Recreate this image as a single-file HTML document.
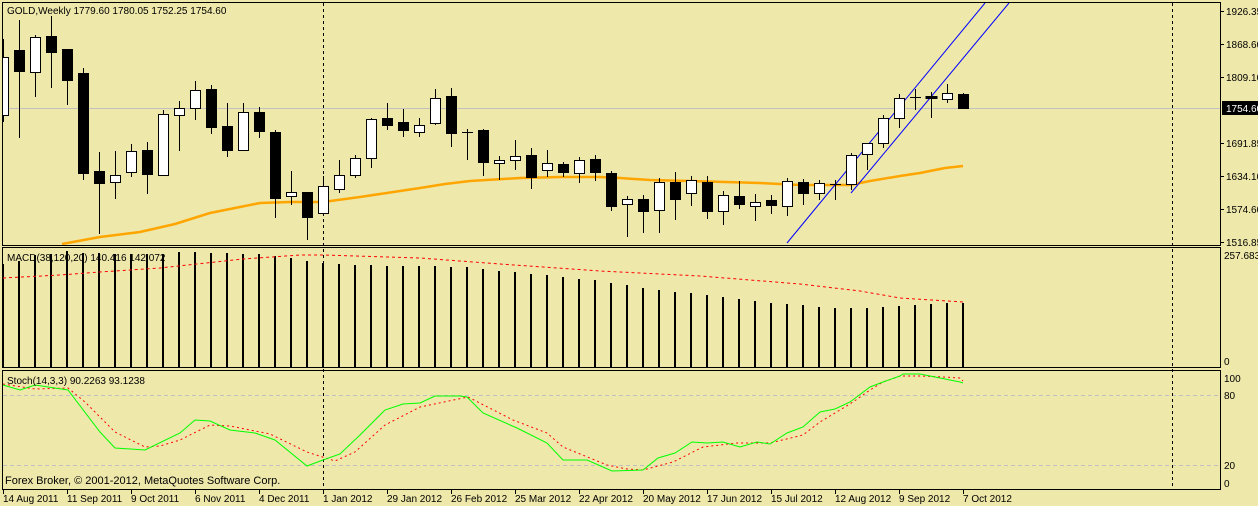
<!DOCTYPE html>
<html><head><meta charset="utf-8"><style>
html,body{margin:0;padding:0;background:#EEE8AA;width:1258px;height:506px;overflow:hidden}
svg{display:block}
text{font-family:"Liberation Sans",sans-serif;font-size:10px;fill:#000}
</style></head><body>
<svg width="1258" height="506" viewBox="0 0 1258 506" xmlns="http://www.w3.org/2000/svg">
<rect width="1258" height="506" fill="#EEE8AA"/>
<defs><clipPath id="mc"><rect x="3" y="3" width="1217" height="242"/></clipPath></defs>
<line x1="3" y1="108.5" x2="1220" y2="108.5" stroke="#c0c0c0"/>
<line x1="3" y1="395.5" x2="1220" y2="395.5" stroke="#c0c0c0" stroke-dasharray="4,3"/>
<line x1="3" y1="465.5" x2="1220" y2="465.5" stroke="#c0c0c0" stroke-dasharray="4,3"/>
<line x1="323.5" y1="3" x2="323.5" y2="489" stroke="#000" stroke-dasharray="3,3"/>
<line x1="1172.5" y1="3" x2="1172.5" y2="489" stroke="#000" stroke-dasharray="3,3"/>
<polyline fill="none" stroke="#FFA500" stroke-width="2.5" points="62,244 100,237 140,232 175,224 210,213 240,207 260,203 290,202 323,202 360,197 400,191 420,188 445,184 470,181 520,178 560,177 600,177 620,178 650,180 690,181 760,183 800,185 850,185 870,181 900,176 920,173 945,168 963,166"/>
<g clip-path="url(#mc)" stroke="#0000ff" stroke-width="1">
<line x1="787" y1="243" x2="985" y2="3"/>
<line x1="851" y1="193" x2="1009" y2="3"/>
</g>
<g clip-path="url(#mc)" stroke="#000" stroke-width="1" shape-rendering="crispEdges">
<line x1="3.5" y1="39" x2="3.5" y2="122"/><rect x="-1.5" y="57.5" width="10" height="58" fill="#fff"/>
<line x1="19.5" y1="20" x2="19.5" y2="138"/><rect x="14.5" y="50.5" width="10" height="21" fill="#000"/>
<line x1="35.5" y1="35" x2="35.5" y2="97"/><rect x="30.5" y="37.5" width="10" height="35" fill="#fff"/>
<line x1="51.5" y1="16" x2="51.5" y2="88"/><rect x="46.5" y="36.5" width="10" height="16" fill="#000"/>
<line x1="67.5" y1="49" x2="67.5" y2="105"/><rect x="62.5" y="49.5" width="10" height="31" fill="#000"/>
<line x1="83.5" y1="68" x2="83.5" y2="180"/><rect x="78.5" y="73.5" width="10" height="100" fill="#000"/>
<line x1="99.5" y1="152" x2="99.5" y2="234"/><rect x="94.5" y="171.5" width="10" height="12" fill="#000"/>
<line x1="115.5" y1="151" x2="115.5" y2="199"/><rect x="110.5" y="175.5" width="10" height="7" fill="#fff"/>
<line x1="131.5" y1="144" x2="131.5" y2="177"/><rect x="126.5" y="151.5" width="10" height="21" fill="#fff"/>
<line x1="147.5" y1="142" x2="147.5" y2="194"/><rect x="142.5" y="150.5" width="10" height="24" fill="#000"/>
<line x1="163.5" y1="110" x2="163.5" y2="176"/><rect x="158.5" y="114.5" width="10" height="61" fill="#fff"/>
<line x1="179.5" y1="101" x2="179.5" y2="151"/><rect x="174.5" y="108.5" width="10" height="7" fill="#fff"/>
<line x1="195.5" y1="81" x2="195.5" y2="120"/><rect x="190.5" y="90.5" width="10" height="18" fill="#fff"/>
<line x1="211.5" y1="85" x2="211.5" y2="134"/><rect x="206.5" y="89.5" width="10" height="38" fill="#000"/>
<line x1="227.5" y1="103" x2="227.5" y2="157"/><rect x="222.5" y="126.5" width="10" height="24" fill="#000"/>
<line x1="243.5" y1="103" x2="243.5" y2="150"/><rect x="238.5" y="112.5" width="10" height="38" fill="#fff"/>
<line x1="259.5" y1="107" x2="259.5" y2="138"/><rect x="254.5" y="112.5" width="10" height="19" fill="#000"/>
<line x1="275.5" y1="130" x2="275.5" y2="218"/><rect x="270.5" y="132.5" width="10" height="66" fill="#000"/>
<line x1="291.5" y1="171" x2="291.5" y2="205"/><rect x="286.5" y="192.5" width="10" height="4" fill="#fff"/>
<line x1="307.5" y1="192" x2="307.5" y2="240"/><rect x="302.5" y="192.5" width="10" height="25" fill="#000"/>
<line x1="323.5" y1="176" x2="323.5" y2="213"/><rect x="318.5" y="186.5" width="10" height="27" fill="#fff"/>
<line x1="339.5" y1="160" x2="339.5" y2="193"/><rect x="334.5" y="175.5" width="10" height="14" fill="#fff"/>
<line x1="355.5" y1="155" x2="355.5" y2="178"/><rect x="350.5" y="158.5" width="10" height="17" fill="#fff"/>
<line x1="371.5" y1="118" x2="371.5" y2="168"/><rect x="366.5" y="119.5" width="10" height="39" fill="#fff"/>
<line x1="387.5" y1="103" x2="387.5" y2="130"/><rect x="382.5" y="118.5" width="10" height="7" fill="#000"/>
<line x1="403.5" y1="109" x2="403.5" y2="137"/><rect x="398.5" y="122.5" width="10" height="8" fill="#000"/>
<line x1="419.5" y1="118" x2="419.5" y2="137"/><rect x="414.5" y="125.5" width="10" height="7" fill="#fff"/>
<line x1="435.5" y1="89" x2="435.5" y2="125"/><rect x="430.5" y="98.5" width="10" height="25" fill="#fff"/>
<line x1="451.5" y1="88" x2="451.5" y2="147"/><rect x="446.5" y="96.5" width="10" height="37" fill="#000"/>
<line x1="467.5" y1="129" x2="467.5" y2="160"/><line x1="462" y1="132.5" x2="473" y2="132.5"/>
<line x1="483.5" y1="129" x2="483.5" y2="176"/><rect x="478.5" y="130.5" width="10" height="32" fill="#000"/>
<line x1="499.5" y1="156" x2="499.5" y2="180"/><rect x="494.5" y="160.5" width="10" height="3" fill="#fff"/>
<line x1="515.5" y1="140" x2="515.5" y2="170"/><rect x="510.5" y="156.5" width="10" height="4" fill="#fff"/>
<line x1="531.5" y1="148" x2="531.5" y2="189"/><rect x="526.5" y="155.5" width="10" height="22" fill="#000"/>
<line x1="547.5" y1="150" x2="547.5" y2="177"/><rect x="542.5" y="163.5" width="10" height="7" fill="#fff"/>
<line x1="563.5" y1="162" x2="563.5" y2="177"/><rect x="558.5" y="164.5" width="10" height="8" fill="#000"/>
<line x1="579.5" y1="157" x2="579.5" y2="183"/><rect x="574.5" y="160.5" width="10" height="13" fill="#fff"/>
<line x1="595.5" y1="155" x2="595.5" y2="181"/><rect x="590.5" y="159.5" width="10" height="13" fill="#000"/>
<line x1="611.5" y1="171" x2="611.5" y2="211"/><rect x="606.5" y="173.5" width="10" height="33" fill="#000"/>
<line x1="627.5" y1="196" x2="627.5" y2="237"/><rect x="622.5" y="199.5" width="10" height="5" fill="#fff"/>
<line x1="643.5" y1="195" x2="643.5" y2="233"/><rect x="638.5" y="199.5" width="10" height="12" fill="#000"/>
<line x1="659.5" y1="178" x2="659.5" y2="233"/><rect x="654.5" y="182.5" width="10" height="28" fill="#fff"/>
<line x1="675.5" y1="172" x2="675.5" y2="220"/><rect x="670.5" y="182.5" width="10" height="17" fill="#000"/>
<line x1="691.5" y1="176" x2="691.5" y2="206"/><rect x="686.5" y="180.5" width="10" height="13" fill="#fff"/>
<line x1="707.5" y1="176" x2="707.5" y2="219"/><rect x="702.5" y="182.5" width="10" height="29" fill="#000"/>
<line x1="723.5" y1="191" x2="723.5" y2="225"/><rect x="718.5" y="195.5" width="10" height="16" fill="#fff"/>
<line x1="739.5" y1="181" x2="739.5" y2="209"/><rect x="734.5" y="196.5" width="10" height="8" fill="#000"/>
<line x1="755.5" y1="194" x2="755.5" y2="221"/><rect x="750.5" y="202.5" width="10" height="4" fill="#fff"/>
<line x1="771.5" y1="195" x2="771.5" y2="214"/><rect x="766.5" y="200.5" width="10" height="5" fill="#000"/>
<line x1="787.5" y1="178" x2="787.5" y2="216"/><rect x="782.5" y="181.5" width="10" height="25" fill="#fff"/>
<line x1="803.5" y1="179" x2="803.5" y2="205"/><rect x="798.5" y="182.5" width="10" height="11" fill="#000"/>
<line x1="819.5" y1="180" x2="819.5" y2="200"/><rect x="814.5" y="183.5" width="10" height="10" fill="#fff"/>
<line x1="835.5" y1="180" x2="835.5" y2="200"/><line x1="830" y1="184.5" x2="841" y2="184.5"/>
<line x1="851.5" y1="153" x2="851.5" y2="190"/><rect x="846.5" y="155.5" width="10" height="29" fill="#fff"/>
<line x1="867.5" y1="143" x2="867.5" y2="170"/><rect x="862.5" y="143.5" width="10" height="11" fill="#fff"/>
<line x1="883.5" y1="115" x2="883.5" y2="148"/><rect x="878.5" y="118.5" width="10" height="25" fill="#fff"/>
<line x1="899.5" y1="94" x2="899.5" y2="128"/><rect x="894.5" y="98.5" width="10" height="20" fill="#fff"/>
<line x1="915.5" y1="89" x2="915.5" y2="110"/><line x1="910" y1="97.5" x2="921" y2="97.5"/>
<line x1="931.5" y1="92" x2="931.5" y2="118"/><rect x="926" y="96.5" width="11" height="2" fill="#000"/>
<line x1="947.5" y1="84" x2="947.5" y2="103"/><rect x="942.5" y="93.5" width="10" height="6" fill="#fff"/>
<line x1="963.5" y1="93" x2="963.5" y2="109"/><rect x="958.5" y="94.5" width="10" height="14" fill="#000"/>
</g>
<g stroke="#000" stroke-width="2" shape-rendering="crispEdges">
<line x1="3" y1="264" x2="3" y2="368"/><line x1="19" y1="261" x2="19" y2="368"/><line x1="35" y1="255" x2="35" y2="368"/><line x1="51" y1="254" x2="51" y2="368"/>
<line x1="67" y1="251" x2="67" y2="368"/><line x1="83" y1="253" x2="83" y2="368"/><line x1="99" y1="253" x2="99" y2="368"/><line x1="115" y1="254" x2="115" y2="368"/>
<line x1="131" y1="254" x2="131" y2="368"/><line x1="147" y1="254" x2="147" y2="368"/><line x1="163" y1="254" x2="163" y2="368"/><line x1="179" y1="252" x2="179" y2="368"/>
<line x1="195" y1="252" x2="195" y2="368"/><line x1="211" y1="253" x2="211" y2="368"/><line x1="227" y1="253" x2="227" y2="368"/><line x1="243" y1="254" x2="243" y2="368"/>
<line x1="259" y1="254" x2="259" y2="368"/><line x1="275" y1="256" x2="275" y2="368"/><line x1="291" y1="258" x2="291" y2="368"/><line x1="307" y1="261" x2="307" y2="368"/>
<line x1="323" y1="263" x2="323" y2="368"/><line x1="339" y1="264" x2="339" y2="368"/><line x1="355" y1="265" x2="355" y2="368"/><line x1="371" y1="265" x2="371" y2="368"/>
<line x1="387" y1="266" x2="387" y2="368"/><line x1="403" y1="266" x2="403" y2="368"/><line x1="419" y1="266" x2="419" y2="368"/><line x1="435" y1="266" x2="435" y2="368"/>
<line x1="451" y1="267" x2="451" y2="368"/><line x1="467" y1="267" x2="467" y2="368"/><line x1="483" y1="269" x2="483" y2="368"/><line x1="499" y1="271" x2="499" y2="368"/>
<line x1="515" y1="272" x2="515" y2="368"/><line x1="531" y1="274" x2="531" y2="368"/><line x1="547" y1="275" x2="547" y2="368"/><line x1="563" y1="277" x2="563" y2="368"/>
<line x1="579" y1="279" x2="579" y2="368"/><line x1="595" y1="280" x2="595" y2="368"/><line x1="611" y1="283" x2="611" y2="368"/><line x1="627" y1="285" x2="627" y2="368"/>
<line x1="643" y1="288" x2="643" y2="368"/><line x1="659" y1="290" x2="659" y2="368"/><line x1="675" y1="292" x2="675" y2="368"/><line x1="691" y1="293" x2="691" y2="368"/>
<line x1="707" y1="295" x2="707" y2="368"/><line x1="723" y1="297" x2="723" y2="368"/><line x1="739" y1="299" x2="739" y2="368"/><line x1="755" y1="301" x2="755" y2="368"/>
<line x1="771" y1="303" x2="771" y2="368"/><line x1="787" y1="304" x2="787" y2="368"/><line x1="803" y1="305" x2="803" y2="368"/><line x1="819" y1="307" x2="819" y2="368"/>
<line x1="835" y1="308" x2="835" y2="368"/><line x1="851" y1="308" x2="851" y2="368"/><line x1="867" y1="308" x2="867" y2="368"/><line x1="883" y1="307" x2="883" y2="368"/>
<line x1="899" y1="306" x2="899" y2="368"/><line x1="915" y1="305" x2="915" y2="368"/><line x1="931" y1="304" x2="931" y2="368"/><line x1="947" y1="303" x2="947" y2="368"/>
<line x1="963" y1="303" x2="963" y2="368"/>
</g>
<polyline fill="none" stroke="#ff0000" stroke-dasharray="3,3" points="3,278 60,275 100,272 160,268 243,259 300,255 323,255 420,258 500,264 600,271 700,276 800,284 860,291 900,298 963,302"/>
<polyline fill="none" stroke="#ff0000" stroke-dasharray="2,3" points="3,384 35,389 68,388 85,402 115,432 145,447 160,446 180,440 210,425 230,426 270,434 307,452 335,461 355,452 385,425 420,407 468,397 513,420 547,433 563,447 607,465 627,469 643,470 673,462 703,447 737,443 770,443 803,435 820,422 835,413 853,402 870,390 883,382 900,376 920,376 943,377 960,378 963,381"/>
<polyline fill="none" stroke="#00ff00" points="3,385 20,390 35,385 68,390 100,432 115,448 145,450 180,433 195,420 210,421 230,430 255,433 275,440 307,466 323,460 340,454 360,435 385,410 403,404 420,403 435,396 460,396 467,397 483,413 517,428 547,443 563,460 587,460 612,471 643,470 658,458 675,453 692,442 707,443 723,442 740,447 757,442 770,444 787,433 803,427 820,412 835,409 850,402 870,387 883,382 900,376 903,374 920,374 930,376 960,382 963,383"/>
<g fill="none" stroke="#000" shape-rendering="crispEdges">
<rect x="2.5" y="2.5" width="1218" height="243"/>
<rect x="2.5" y="247.5" width="1218" height="120"/>
<rect x="2.5" y="370.5" width="1218" height="119"/>
</g>
<g stroke="#000" shape-rendering="crispEdges">
<line x1="1220" y1="11.5" x2="1224" y2="11.5"/><line x1="1220" y1="44.5" x2="1224" y2="44.5"/><line x1="1220" y1="77.5" x2="1224" y2="77.5"/>
<line x1="1220" y1="143.5" x2="1224" y2="143.5"/><line x1="1220" y1="176.5" x2="1224" y2="176.5"/><line x1="1220" y1="209.5" x2="1224" y2="209.5"/><line x1="1220" y1="242.5" x2="1224" y2="242.5"/>
<line x1="3.5" y1="489" x2="3.5" y2="494"/><line x1="67.5" y1="489" x2="67.5" y2="494"/><line x1="131.5" y1="489" x2="131.5" y2="494"/><line x1="195.5" y1="489" x2="195.5" y2="494"/><line x1="259.5" y1="489" x2="259.5" y2="494"/><line x1="323.5" y1="489" x2="323.5" y2="494"/><line x1="387.5" y1="489" x2="387.5" y2="494"/><line x1="451.5" y1="489" x2="451.5" y2="494"/><line x1="515.5" y1="489" x2="515.5" y2="494"/><line x1="579.5" y1="489" x2="579.5" y2="494"/><line x1="643.5" y1="489" x2="643.5" y2="494"/><line x1="707.5" y1="489" x2="707.5" y2="494"/><line x1="771.5" y1="489" x2="771.5" y2="494"/><line x1="835.5" y1="489" x2="835.5" y2="494"/><line x1="899.5" y1="489" x2="899.5" y2="494"/><line x1="963.5" y1="489" x2="963.5" y2="494"/>
</g>
<rect x="1222" y="101" width="36" height="14" fill="#000"/>
<text x="1226" y="15">1926.35</text>
<text x="1226" y="48">1868.60</text>
<text x="1226" y="81">1809.10</text>
<text x="1226" y="112" style="fill:#fff">1754.60</text>
<text x="1226" y="147">1691.85</text>
<text x="1226" y="180">1634.10</text>
<text x="1226" y="213">1574.60</text>
<text x="1226" y="246">1516.85</text>
<text x="1224" y="259">257.683</text>
<text x="1224" y="365">0</text>
<text x="1224" y="382">100</text>
<text x="1224" y="399">80</text>
<text x="1224" y="469">20</text>
<text x="1224" y="487">0</text>
<text x="7" y="14">GOLD,Weekly  1779.60 1780.05 1752.25 1754.60</text>
<text x="7" y="261">MACD(38,120,20) 140.416 142.072</text>
<text x="7" y="384">Stoch(14,3,3) 90.2263 93.1238</text>
<text x="5" y="484" style="font-size:11px">Forex Broker, © 2001-2012, MetaQuotes Software Corp.</text>
<text x="3" y="502">14 Aug 2011</text>
<text x="67" y="502">11 Sep 2011</text>
<text x="131" y="502">9 Oct 2011</text>
<text x="195" y="502">6 Nov 2011</text>
<text x="259" y="502">4 Dec 2011</text>
<text x="323" y="502">1 Jan 2012</text>
<text x="387" y="502">29 Jan 2012</text>
<text x="451" y="502">26 Feb 2012</text>
<text x="515" y="502">25 Mar 2012</text>
<text x="579" y="502">22 Apr 2012</text>
<text x="643" y="502">20 May 2012</text>
<text x="707" y="502">17 Jun 2012</text>
<text x="771" y="502">15 Jul 2012</text>
<text x="835" y="502">12 Aug 2012</text>
<text x="899" y="502">9 Sep 2012</text>
<text x="963" y="502">7 Oct 2012</text>
</svg>
</body></html>
